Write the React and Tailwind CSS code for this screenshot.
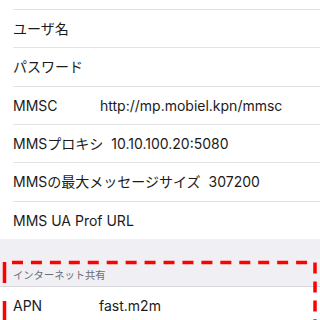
import React from "react";

const rows = [
  { label: "ユーザ名" },
  { label: "パスワード" },
  { label: "MMSC", value: "http://mp.mobiel.kpn/mmsc", fixed: true },
  { label: "MMSプロキシ", value: "10.10.100.20:5080" },
  { label: "MMSの最大メッセージサイズ", value: "307200" },
  { label: "MMS UA Prof URL" },
];

function Row({ label, value, fixed }) {
  return (
    <div className="pl-[13px]">
      <div className="h-[38.33px] border-t border-[#e3e3e6] flex items-center text-[14px] text-[#1b1b1b]">
        {fixed ? (
          <>
            <span className="w-[87px] shrink-0">{label}</span>
            <span>{value}</span>
          </>
        ) : (
          <>
            <span>{label}</span>
            {value && <span className="ml-[8px]">{value}</span>}
          </>
        )}
      </div>
    </div>
  );
}

export default function App() {
  return (
    <div
      className="relative w-[320px] h-[320px] overflow-hidden bg-white"
      style={{ fontFamily: 'Inter, "Noto Sans CJK JP", sans-serif' }}
    >
      <div className="h-[9px]" />
      {rows.map((r) => (
        <Row key={r.label} {...r} />
      ))}

      {/* section header */}
      <div className="h-[48px] bg-[#efeff4] border-b border-[#d8d8dc] flex items-end pl-[13px] pb-[3px]">
        <span className="text-[10.3px] text-[#6d6d72]">インターネット共有</span>
      </div>

      <div className="pl-[13px]">
        <div className="h-[38px] flex items-center text-[14px] text-[#1b1b1b]">
          <span className="w-[86px] shrink-0">APN</span>
          <span>fast.m2m</span>
        </div>
      </div>

      {/* red dashed highlight */}
      <svg className="absolute left-0 top-0" width="320" height="320">
        <path
          d="M12 262.5 L315 262.5 L315 340"
          fill="none"
          stroke="#ff0000"
          strokeWidth="3.5"
          strokeDasharray="11 7.94"
        />
        <path
          d="M4.5 262 L4.5 340"
          fill="none"
          stroke="#ff0000"
          strokeWidth="3.5"
          strokeDasharray="21 18"
        />
      </svg>
    </div>
  );
}
